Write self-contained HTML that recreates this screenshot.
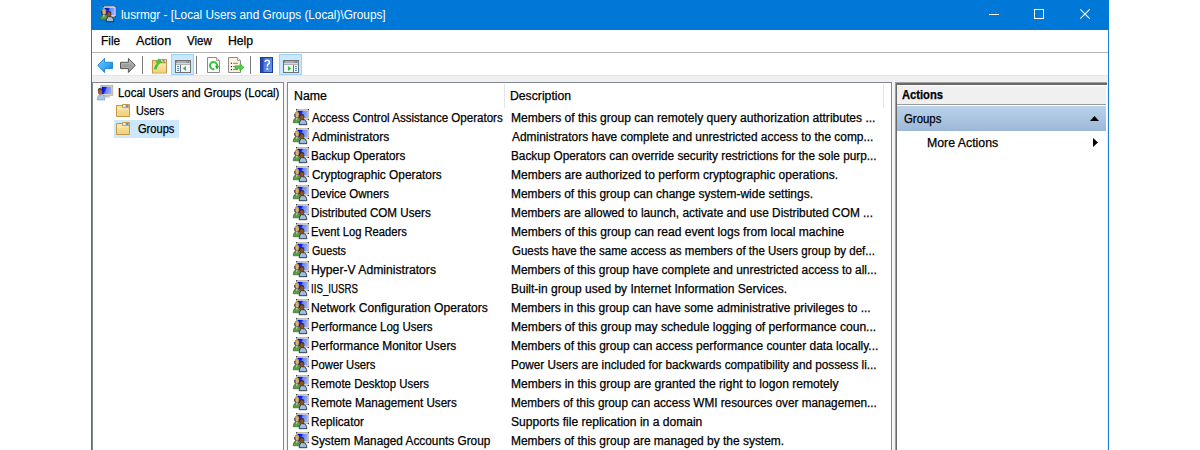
<!DOCTYPE html>
<html><head><meta charset="utf-8">
<style>
html,body{margin:0;padding:0;width:1200px;height:450px;overflow:hidden;background:#fff;}
body{position:relative;font-family:"Liberation Sans",sans-serif;font-size:12px;color:#000;}
.a{position:absolute;box-sizing:border-box;}
.t{position:absolute;white-space:pre;line-height:15px;transform-origin:0 0;-webkit-text-stroke:0.25px currentColor;}
svg{position:absolute;overflow:visible;}
</style></head><body>
<div class="a" style="left:91px;top:0;width:1018px;height:450px;background:#0078d7;"></div>
<div class="a" style="left:92px;top:30px;width:1016px;height:420px;background:#fff;"></div>
<div class="a" style="left:92px;top:52px;width:1016px;height:1px;background:#b4b4b4;"></div>
<div class="a" style="left:92px;top:75px;width:1016px;height:375px;background:#f0f0f0;"></div>
<div class="a" style="left:92px;top:75px;width:1016px;height:1px;background:#e6e6e6;"></div>
<div class="a" style="left:91px;top:30px;width:1px;height:420px;background:#1a80d8;"></div>
<div class="a" style="left:1108px;top:30px;width:1px;height:420px;background:#1a80d8;"></div>
<span id="title" class="t" style="left:121.0px;top:8px;transform:scaleX(0.9821);color:#fff;-webkit-text-stroke:0;">lusrmgr - [Local Users and Groups (Local)\Groups]</span>
<div class="a" style="left:989px;top:14px;width:10px;height:1px;background:#fff"></div>
<div class="a" style="left:1034px;top:9px;width:10px;height:10px;border:1px solid #fff"></div>
<svg style="left:1080px;top:9px" width="10" height="10" viewBox="0 0 10 10"><path d="M0.3 0.3L9.7 9.7M9.7 0.3L0.3 9.7" stroke="#fff" stroke-width="1.1"/></svg>
<span id="m1" class="t" style="left:101.2px;top:34px;transform:scaleX(0.9900);">File</span>
<span id="m2" class="t" style="left:136.0px;top:34px;transform:scaleX(1.0548);">Action</span>
<span id="m3" class="t" style="left:187.0px;top:34px;transform:scaleX(0.9615);">View</span>
<span id="m4" class="t" style="left:227.8px;top:34px;transform:scaleX(1.0181);">Help</span>
<div class="a" style="left:171px;top:54px;width:23px;height:21px;background:#cce8ff;border:1px solid #99d1ff"></div>
<div class="a" style="left:279px;top:54px;width:23px;height:21px;background:#cce8ff;border:1px solid #99d1ff"></div>
<div class="a" style="left:142px;top:56px;width:1px;height:18px;background:#7a7a7a"></div>
<div class="a" style="left:196px;top:56px;width:1px;height:18px;background:#7a7a7a"></div>
<div class="a" style="left:250px;top:56px;width:1px;height:18px;background:#7a7a7a"></div>
<div class="a" style="left:92px;top:82px;width:192px;height:400px;background:#fff;border:1px solid #828790"></div>
<div class="a" style="left:284px;top:82px;width:2px;height:400px;background:linear-gradient(90deg,#f9f9f9,#f2f2f2)"></div>
<div class="a" style="left:287px;top:82px;width:605px;height:400px;background:#fff;border:1px solid #828790"></div>
<div class="a" style="left:892px;top:82px;width:2px;height:400px;background:linear-gradient(90deg,#f9f9f9,#f2f2f2)"></div>
<div class="a" style="left:895px;top:82px;width:212px;height:400px;background:#a0a0a0"></div>
<div class="a" style="left:896px;top:83px;width:211px;height:400px;background:#696969"></div>
<div class="a" style="left:897px;top:85px;width:210px;height:400px;background:#fff"></div>
<div class="a" style="left:897px;top:86px;width:209px;height:18px;background:#f0f0f0"></div>
<div class="a" style="left:897px;top:104px;width:209px;height:1px;background:#9a9a9a"></div>
<div class="a" style="left:897px;top:106px;width:209px;height:25px;background:linear-gradient(#bad2ea,#9db7d8)"></div>
<span id="act" class="t" style="left:902.0px;top:88px;transform:scaleX(0.9318);font-weight:bold;">Actions</span>
<span id="grp" class="t" style="left:904.0px;top:112px;transform:scaleX(0.9491);">Groups</span>
<span id="more" class="t" style="left:927.4px;top:136px;transform:scaleX(1.0266);">More Actions</span>
<svg style="left:1090px;top:116px" width="9" height="5" viewBox="0 0 9 5"><path d="M0 5L4.5 0L9 5Z" fill="#000"/></svg>
<svg style="left:1093px;top:138px" width="5" height="9" viewBox="0 0 5 9"><path d="M0 0L5 4.5L0 9Z" fill="#000"/></svg>
<div class="a" style="left:114px;top:120px;width:65px;height:18px;background:#cce8ff"></div>
<span id="tr0" class="t" style="left:118.0px;top:86px;transform:scaleX(0.9527);">Local Users and Groups (Local)</span>
<span id="tr1" class="t" style="left:136.0px;top:104px;transform:scaleX(0.9006);">Users</span>
<span id="tr2" class="t" style="left:138.0px;top:122px;transform:scaleX(0.9234);">Groups</span>
<div class="a" style="left:504px;top:84px;width:1px;height:24px;background:#e5e5e5"></div>
<div class="a" style="left:883px;top:84px;width:1px;height:24px;background:#e5e5e5"></div>
<span id="hn" class="t" style="left:294.2px;top:89px;transform:scaleX(1.0272);">Name</span>
<span id="hd" class="t" style="left:510.2px;top:89px;transform:scaleX(1.0175);">Description</span>
<span id="n0" class="t" style="left:312.0px;top:111px;transform:scaleX(0.9626);">Access Control Assistance Operators</span>
<span id="d0" class="t" style="left:511.0px;top:111px;transform:scaleX(1.0044);">Members of this group can remotely query authorization attributes ...</span>
<svg style="left:293px;top:109px" width="16" height="16"><use href="#ig"/></svg>
<span id="n1" class="t" style="left:312.0px;top:130px;transform:scaleX(1.0080);">Administrators</span>
<span id="d1" class="t" style="left:512.0px;top:130px;transform:scaleX(0.9923);">Administrators have complete and unrestricted access to the comp...</span>
<svg style="left:293px;top:128px" width="16" height="16"><use href="#ig"/></svg>
<span id="n2" class="t" style="left:311.0px;top:149px;transform:scaleX(0.9748);">Backup Operators</span>
<span id="d2" class="t" style="left:511.0px;top:149px;transform:scaleX(0.9822);">Backup Operators can override security restrictions for the sole purp...</span>
<svg style="left:293px;top:147px" width="16" height="16"><use href="#ig"/></svg>
<span id="n3" class="t" style="left:312.0px;top:168px;transform:scaleX(0.9878);">Cryptographic Operators</span>
<span id="d3" class="t" style="left:511.0px;top:168px;transform:scaleX(1.0031);">Members are authorized to perform cryptographic operations.</span>
<svg style="left:293px;top:166px" width="16" height="16"><use href="#ig"/></svg>
<span id="n4" class="t" style="left:311.0px;top:187px;transform:scaleX(0.9576);">Device Owners</span>
<span id="d4" class="t" style="left:511.0px;top:187px;transform:scaleX(0.9973);">Members of this group can change system-wide settings.</span>
<svg style="left:293px;top:185px" width="16" height="16"><use href="#ig"/></svg>
<span id="n5" class="t" style="left:311.0px;top:206px;transform:scaleX(0.9705);">Distributed COM Users</span>
<span id="d5" class="t" style="left:511.0px;top:206px;transform:scaleX(0.9885);">Members are allowed to launch, activate and use Distributed COM ...</span>
<svg style="left:293px;top:204px" width="16" height="16"><use href="#ig"/></svg>
<span id="n6" class="t" style="left:311.0px;top:225px;transform:scaleX(0.9327);">Event Log Readers</span>
<span id="d6" class="t" style="left:511.0px;top:225px;transform:scaleX(1.0055);">Members of this group can read event logs from local machine</span>
<svg style="left:293px;top:223px" width="16" height="16"><use href="#ig"/></svg>
<span id="n7" class="t" style="left:312.0px;top:244px;transform:scaleX(0.8929);">Guests</span>
<span id="d7" class="t" style="left:512.0px;top:244px;transform:scaleX(0.9595);">Guests have the same access as members of the Users group by def...</span>
<svg style="left:293px;top:242px" width="16" height="16"><use href="#ig"/></svg>
<span id="n8" class="t" style="left:311.0px;top:263px;transform:scaleX(1.0131);">Hyper-V Administrators</span>
<span id="d8" class="t" style="left:511.0px;top:263px;transform:scaleX(0.9902);">Members of this group have complete and unrestricted access to all...</span>
<svg style="left:293px;top:261px" width="16" height="16"><use href="#ig"/></svg>
<span id="n9" class="t" style="left:311.0px;top:282px;transform:scaleX(0.8105);">IIS_IUSRS</span>
<span id="d9" class="t" style="left:511.0px;top:282px;">Built-in group used by Internet Information Services.</span>
<svg style="left:293px;top:280px" width="16" height="16"><use href="#ig"/></svg>
<span id="n10" class="t" style="left:311.0px;top:301px;transform:scaleX(1.0080);">Network Configuration Operators</span>
<span id="d10" class="t" style="left:511.0px;top:301px;transform:scaleX(0.9950);">Members in this group can have some administrative privileges to ...</span>
<svg style="left:293px;top:299px" width="16" height="16"><use href="#ig"/></svg>
<span id="n11" class="t" style="left:311.0px;top:320px;transform:scaleX(0.9585);">Performance Log Users</span>
<span id="d11" class="t" style="left:511.0px;top:320px;transform:scaleX(1.0083);">Members of this group may schedule logging of performance coun...</span>
<svg style="left:293px;top:318px" width="16" height="16"><use href="#ig"/></svg>
<span id="n12" class="t" style="left:311.0px;top:339px;transform:scaleX(0.9904);">Performance Monitor Users</span>
<span id="d12" class="t" style="left:511.0px;top:339px;transform:scaleX(0.9946);">Members of this group can access performance counter data locally...</span>
<svg style="left:293px;top:337px" width="16" height="16"><use href="#ig"/></svg>
<span id="n13" class="t" style="left:311.0px;top:358px;transform:scaleX(0.9375);">Power Users</span>
<span id="d13" class="t" style="left:511.0px;top:358px;transform:scaleX(0.9769);">Power Users are included for backwards compatibility and possess li...</span>
<svg style="left:293px;top:356px" width="16" height="16"><use href="#ig"/></svg>
<span id="n14" class="t" style="left:311.0px;top:377px;transform:scaleX(0.9512);">Remote Desktop Users</span>
<span id="d14" class="t" style="left:511.0px;top:377px;transform:scaleX(1.0062);">Members in this group are granted the right to logon remotely</span>
<svg style="left:293px;top:375px" width="16" height="16"><use href="#ig"/></svg>
<span id="n15" class="t" style="left:311.0px;top:396px;transform:scaleX(0.9718);">Remote Management Users</span>
<span id="d15" class="t" style="left:511.0px;top:396px;transform:scaleX(0.9796);">Members of this group can access WMI resources over managemen...</span>
<svg style="left:293px;top:394px" width="16" height="16"><use href="#ig"/></svg>
<span id="n16" class="t" style="left:311.0px;top:415px;transform:scaleX(0.9777);">Replicator</span>
<span id="d16" class="t" style="left:511.0px;top:415px;transform:scaleX(1.0064);">Supports file replication in a domain</span>
<svg style="left:293px;top:413px" width="16" height="16"><use href="#ig"/></svg>
<span id="n17" class="t" style="left:311.0px;top:434px;transform:scaleX(0.9845);">System Managed Accounts Group</span>
<span id="d17" class="t" style="left:511.0px;top:434px;transform:scaleX(0.9963);">Members of this group are managed by the system.</span>
<svg style="left:293px;top:432px" width="16" height="16"><use href="#ig"/></svg>
<svg style="left:100px;top:6px" width="16" height="16"><use href="#ig"/></svg>
<svg style="left:97px;top:57px" width="16" height="16"><use href="#iback"/></svg>
<svg style="left:120px;top:57px" width="16" height="16"><use href="#ifwd"/></svg>
<svg style="left:152px;top:58px" width="16" height="16"><use href="#ifup"/></svg>
<svg style="left:175px;top:60px" width="16" height="16"><use href="#itree"/></svg>
<svg style="left:207px;top:57px" width="16" height="16"><use href="#iref"/></svg>
<svg style="left:228px;top:57px" width="16" height="16"><use href="#iexp"/></svg>
<svg style="left:260px;top:57px" width="16" height="16"><use href="#ihelp"/></svg>
<svg style="left:283px;top:60px" width="16" height="16"><use href="#iact"/></svg>
<svg style="left:97px;top:85px" width="16" height="16"><use href="#icomp"/></svg>
<svg style="left:116px;top:104px" width="16" height="16"><use href="#ifold"/></svg>
<svg style="left:116px;top:122px" width="16" height="16"><use href="#ifold"/></svg>
<svg width="0" height="0" style="position:absolute;left:0;top:0">
<defs>
<linearGradient id="scr" x1="0" y1="0" x2="1" y2="0.3"><stop offset="0" stop-color="#0000d0"/><stop offset="0.42" stop-color="#1028f0"/><stop offset="0.55" stop-color="#6a88f8"/><stop offset="1" stop-color="#90a8ff"/></linearGradient>
<linearGradient id="bluearr" x1="0" y1="0" x2="1" y2="1"><stop offset="0" stop-color="#70d4ff"/><stop offset="0.6" stop-color="#30a8f0"/><stop offset="1" stop-color="#0a70d0"/></linearGradient>
<linearGradient id="grayarr" x1="0" y1="0" x2="0" y2="1"><stop offset="0" stop-color="#b8b8b8"/><stop offset="1" stop-color="#858585"/></linearGradient>
<linearGradient id="fold" x1="0" y1="0" x2="0" y2="1"><stop offset="0" stop-color="#fae6a8"/><stop offset="1" stop-color="#f0cf78"/></linearGradient>
<linearGradient id="book" x1="0" y1="0" x2="1" y2="1"><stop offset="0" stop-color="#3c68d8"/><stop offset="1" stop-color="#6c98ec"/></linearGradient>
<g id="ig">
<rect x="3.6" y="0.6" width="11.8" height="10" fill="#e2dacb" stroke="#bcb4a4" stroke-width="0.8"/>
<rect x="4.6" y="1.8" width="10" height="7.4" fill="url(#scr)"/>
<rect x="3" y="0" width="1.2" height="1.2" fill="#404040"/><rect x="14.8" y="0" width="1.2" height="1.2" fill="#404040"/><rect x="14.8" y="10" width="1.2" height="1.2" fill="#404040"/>
<path d="M0.2 13.8 Q0.2 8.8 3.9 8.8 Q7.6 8.8 7.6 13.8Z" fill="#5a9a42" stroke="#2e5a22" stroke-width="0.6"/>
<path d="M3.2 9 L3.9 11.8 L4.6 9Z" fill="#eef4e8"/>
<ellipse cx="4" cy="5.9" rx="2.2" ry="3" fill="#dab07c" stroke="#4a3a20" stroke-width="0.5"/>
<path d="M1.8 5.4 Q1.8 2.7 4 2.7 Q6.2 2.7 6.2 5.4 Q5.2 3.9 4 4 Q2.8 4 1.8 5.4Z" fill="#b8a050"/>
<path d="M1.8 5 Q1.4 7.6 2.4 8.6" fill="none" stroke="#181818" stroke-width="0.8"/>
<path d="M6.2 15.7 Q6.2 10.6 10 10.6 Q13.8 10.6 13.8 15.7Z" fill="#9cbce0" stroke="#101820" stroke-width="0.8"/>
<path d="M8.3 10.8 L8.9 13 L9.5 10.8Z" fill="#f0f4ff"/>
<ellipse cx="8.9" cy="8.1" rx="2.2" ry="2.9" fill="#8c5428" stroke="#2a1a10" stroke-width="0.5"/>
<path d="M6.7 7.6 Q6.7 5.1 8.9 5.1 Q11.1 5.1 11.1 7.6 Q10.1 6.2 8.9 6.3 Q7.7 6.3 6.7 7.6Z" fill="#2c2c2c"/>
</g>
<g id="icomp">
<rect x="3.8" y="0.5" width="12" height="9.8" fill="#e0d9ca" stroke="#b0a898" stroke-width="0.8"/>
<rect x="4.8" y="1.8" width="9.6" height="7.2" fill="url(#scr)"/>
<path d="M8 10.5 L12 10.5 L13.5 12.5 L7 12.5Z" fill="#c8c0b0"/>
<path d="M0.2 15 Q0.2 9.4 4.1 9.4 Q8 9.4 8 15Z" fill="#a6c6ea" stroke="#6a8aaa" stroke-width="0.5"/>
<ellipse cx="3" cy="6.6" rx="2.1" ry="3.2" fill="#a06634"/>
<path d="M0.8 6.2 Q0.8 3 3 3 Q5.2 3 5.2 6.2 Q4.2 4.5 3 4.6 Q1.8 4.6 0.8 6.2Z" fill="#3a3a3a"/>
</g>
<g id="ifold">
<path d="M6.5 0.5 H13.5 V4 H6.5Z" fill="#f0d488" stroke="#c49a48" stroke-width="1"/>
<rect x="9.5" y="1.3" width="3" height="1.5" fill="#3a7ad8"/>
<rect x="7.5" y="1.3" width="2" height="1.5" fill="#ffffff"/>
<path d="M0.5 1.5 H6 L7 4 H13.5 V12.5 H0.5Z" fill="url(#fold)" stroke="#c49a48" stroke-width="1"/>
<path d="M1.5 4.8 H12.5" stroke="#fdf2c8" stroke-width="1"/>
</g>
<g id="iback">
<path d="M0.7 8.3 L7.6 1.3 V5.3 H15.5 V11.6 H7.6 V15.5Z" fill="url(#bluearr)" stroke="#2a82d8" stroke-width="1" stroke-linejoin="round"/>
</g>
<g id="ifwd">
<path d="M15.3 8.3 L8.4 1.3 V5.3 H0.5 V11.6 H8.4 V15.5Z" fill="url(#grayarr)" stroke="#585858" stroke-width="1" stroke-linejoin="round"/>
<path d="M2 6.5 H9.4 V3.8 L13.6 8.3 L9.4 12.8 V10.4 H2Z" fill="none" stroke="#d0d0d0" stroke-width="0.5" opacity="0.7"/>
</g>
<g id="ifup">
<rect x="0.5" y="2.5" width="14" height="12.5" fill="#f0d080" stroke="#c49a48" stroke-width="1"/>
<rect x="8.5" y="1.5" width="6" height="3" fill="#f4dc98" stroke="#c49a48" stroke-width="1"/>
<rect x="10.6" y="2.3" width="2.2" height="1.3" fill="#3a7ad8"/>
<rect x="1" y="6" width="13" height="8.5" fill="url(#fold)"/>
<path d="M1" fill="none"/>
<path d="M2.2 10.8 Q3.2 6.5 5.6 4.8 L4 4.2 L7 0.6 L9.8 4.6 L7.8 4.9 Q5.2 7.5 4.2 11.2Z" fill="#46c83a" stroke="#34a82a" stroke-width="0.5"/>
</g>
<g id="iwin">
<rect x="0.5" y="0.5" width="15" height="12" fill="#f4f4f4" stroke="#6d7178" stroke-width="1"/>
<rect x="1" y="1" width="14" height="3.5" fill="#6d7178"/>
<rect x="1.5" y="1.5" width="10" height="1" fill="#e8e8e8"/>
<rect x="12.3" y="1.5" width="1" height="1" fill="#e8e8e8"/>
<rect x="14" y="1.5" width="1" height="1" fill="#e8e8e8"/>
<rect x="1" y="3" width="14" height="1" fill="#d8d8d8"/>
</g>
<g id="itree">
<use href="#iwin"/>
<rect x="1" y="5" width="4" height="7" fill="#fff"/>
<rect x="5" y="5" width="1" height="7.5" fill="#6d7178"/>
<rect x="2" y="6" width="2.2" height="1" rx="0.5" fill="#3a78c8"/>
<rect x="2" y="8" width="2.2" height="1" rx="0.5" fill="#3a78c8"/>
<rect x="2" y="10" width="2.2" height="1" rx="0.5" fill="#3a78c8"/>
<path d="M7.8 8.4 L11 6 V11Z" fill="#3cb83c"/>
</g>
<g id="iact">
<use href="#iwin"/>
<rect x="11" y="5" width="4" height="7" fill="#fff"/>
<rect x="10" y="5" width="1" height="7.5" fill="#6d7178"/>
<rect x="11.8" y="6" width="2.2" height="1" rx="0.5" fill="#3a78c8"/>
<rect x="11.8" y="8" width="2.2" height="1" rx="0.5" fill="#3a78c8"/>
<rect x="11.8" y="10" width="2.2" height="1" rx="0.5" fill="#3a78c8"/>
<path d="M8.2 8.4 L5 6 V11Z" fill="#3cb83c"/>
</g>
<g id="iref">
<path d="M0.5 0.5 H9.5 L12.5 3.5 V15.5 H0.5Z" fill="#fff" stroke="#8a8a8a" stroke-width="1"/>
<path d="M9.5 0.5 V3.5 H12.5" fill="#eee" stroke="#a0a0a0" stroke-width="1"/>
<path d="M7.4 12.1 A3.6 3.6 0 1 1 10.1 9.2" fill="none" stroke="#3cc43c" stroke-width="2"/>
<path d="M8 8.8 L12.2 9 L9.9 12.8Z" fill="#2aa82a"/>
</g>
<g id="iexp">
<path d="M0.5 0.5 H9.5 L12.5 3.5 V15.5 H0.5Z" fill="#fcf4dc" stroke="#8a8a8a" stroke-width="1"/>
<path d="M9.5 0.5 V3.5 H12.5" fill="#f0f0f0" stroke="#a0a0a0" stroke-width="1"/>
<rect x="2.8" y="5.7" width="1.2" height="1.2" fill="#303030"/>
<rect x="2.8" y="9" width="1.2" height="1.2" fill="#303030"/>
<rect x="2.8" y="12" width="1.2" height="1.2" fill="#303030"/>
<rect x="5" y="5.8" width="5" height="1" fill="#8080b0"/>
<rect x="5" y="9.1" width="5" height="1" fill="#8080b0"/>
<rect x="5" y="12.1" width="5" height="1" fill="#8080b0"/>
<path d="M7 8.8 H12 V6.6 L16 10.4 L12 14 V11.8 H7Z" fill="#52cc4a" stroke="#36a830" stroke-width="0.6"/>
</g>
<g id="ihelp">
<rect x="0.5" y="0.5" width="12" height="15" fill="url(#book)" stroke="#1c3c9c" stroke-width="1"/>
<rect x="1" y="1" width="2.5" height="14" fill="#2448b8"/>
<path d="M5.2 5 Q5.2 3.2 7.2 3.2 Q9.4 3.2 9.4 5.2 Q9.4 6.4 8.2 7.2 Q7.3 7.8 7.3 9.5" fill="none" stroke="#fff" stroke-width="1.6"/>
<rect x="6.4" y="11" width="1.8" height="1.8" fill="#fff"/>
</g>
</defs></svg>
</body></html>
